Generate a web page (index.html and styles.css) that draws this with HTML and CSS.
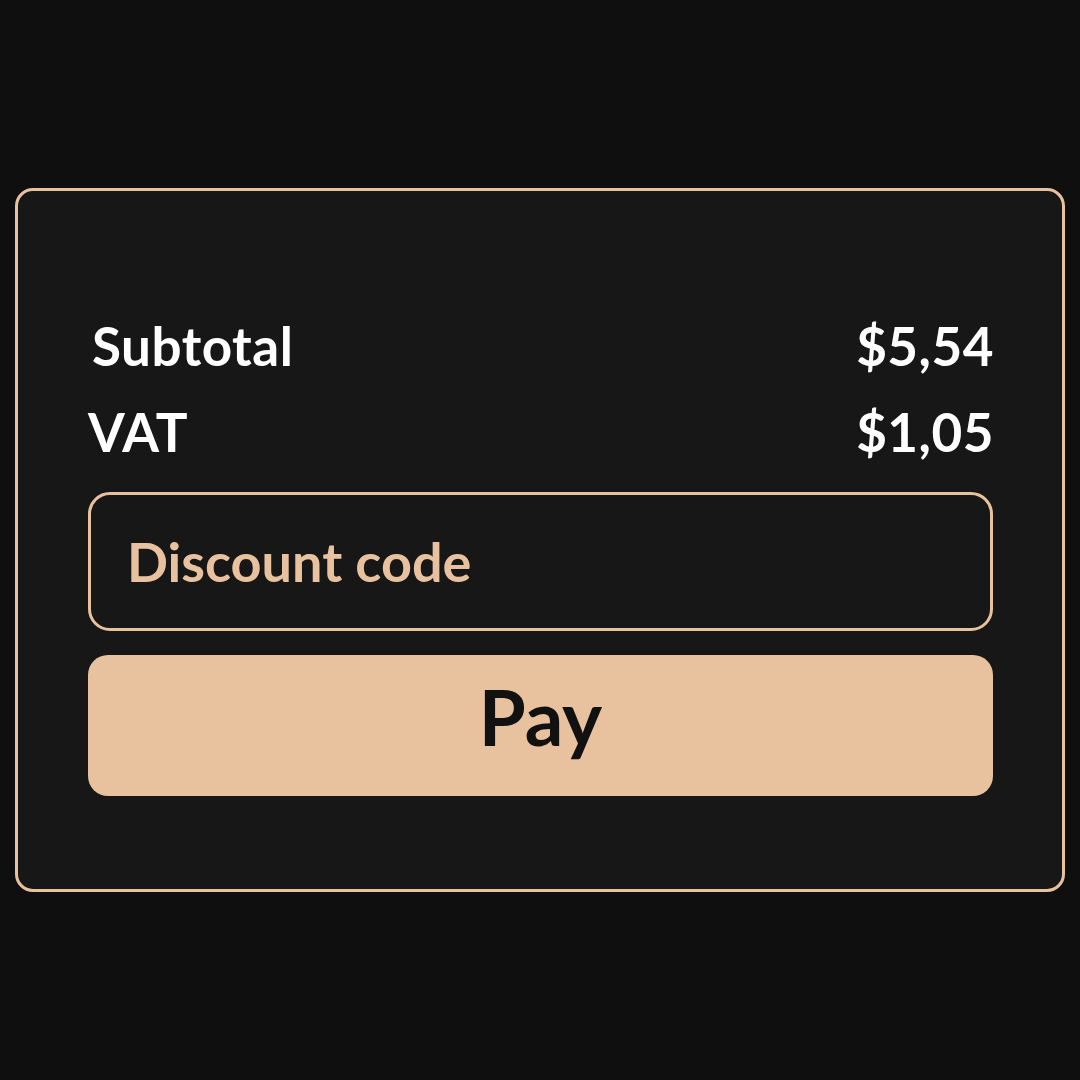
FILE: index.html
```html
<!DOCTYPE html>
<html lang="en">
<head>
    <meta charset="UTF-8">
    <meta name="viewport" content="width=device-width, initial-scale=1.0">
    <title>Checkout</title>
    <link rel="stylesheet" href="styles.css">
</head>
<body>
    <div class="kart">
        <div class="satir">
            <span class="etiket etiket-sub">Subtotal</span>
            <span class="tutar">$5,54</span>
        </div>
        <div class="satir">
            <span class="etiket">VAT</span>
            <span class="tutar">$1,05</span>
        </div>
        <div class="indirim">
            <input class="indirim-input" type="text" placeholder="Discount code">
        </div>
        <button class="ode-button">Pay</button>
    </div>
</body>
</html>
```

FILE: styles.css
```css
html, body {
    height: 100%;
    margin: 0;
}

body {
    display: flex;
    justify-content: center;
    align-items: center;
    background-color: #0f0f0f; /* sayfa arka plani */
    font-family: "Lato", "Liberation Sans", sans-serif;
}

.kart {
    box-sizing: border-box;
    width: 1050px;
    height: 704px;
    border: 3px solid #e8c29e;
    border-radius: 18px;
    background: #171717;
    padding: 125px 69px 0 70px;
    display: flex;
    flex-direction: column;
}

.satir {
    display: flex;
    justify-content: space-between;
    align-items: center;
    height: 60px;
    line-height: 60px;
    font-size: 53px;
    font-weight: 700;
    letter-spacing: 0.5px;
    color: #ffffff;
    margin-bottom: 26px;
}

.etiket-sub {
    padding-left: 4px;
}

.tutar {
    margin-right: -1px;
}

.indirim {
    margin-top: 4px;
}

.indirim-input {
    box-sizing: border-box;
    width: 100%;
    height: 139px;
    border: 3px solid #e8c29e;
    border-radius: 22px;
    background: #171717;
    padding: 0 0 0 36px;
    font-family: inherit;
    font-size: 54px;
    font-weight: 700;
    color: #e8c29e;
    outline: none;
}

.indirim-input::placeholder {
    color: #e8c29e;
    opacity: 1;
}

.ode-button {
    margin-top: 24px;
    width: 100%;
    height: 141px;
    border: none;
    border-radius: 20px;
    background: #e8c29e;
    color: #111111;
    font-family: inherit;
    font-size: 76px;
    font-weight: 700;
    padding: 0 0 18px 0;
    cursor: pointer;
}
```
